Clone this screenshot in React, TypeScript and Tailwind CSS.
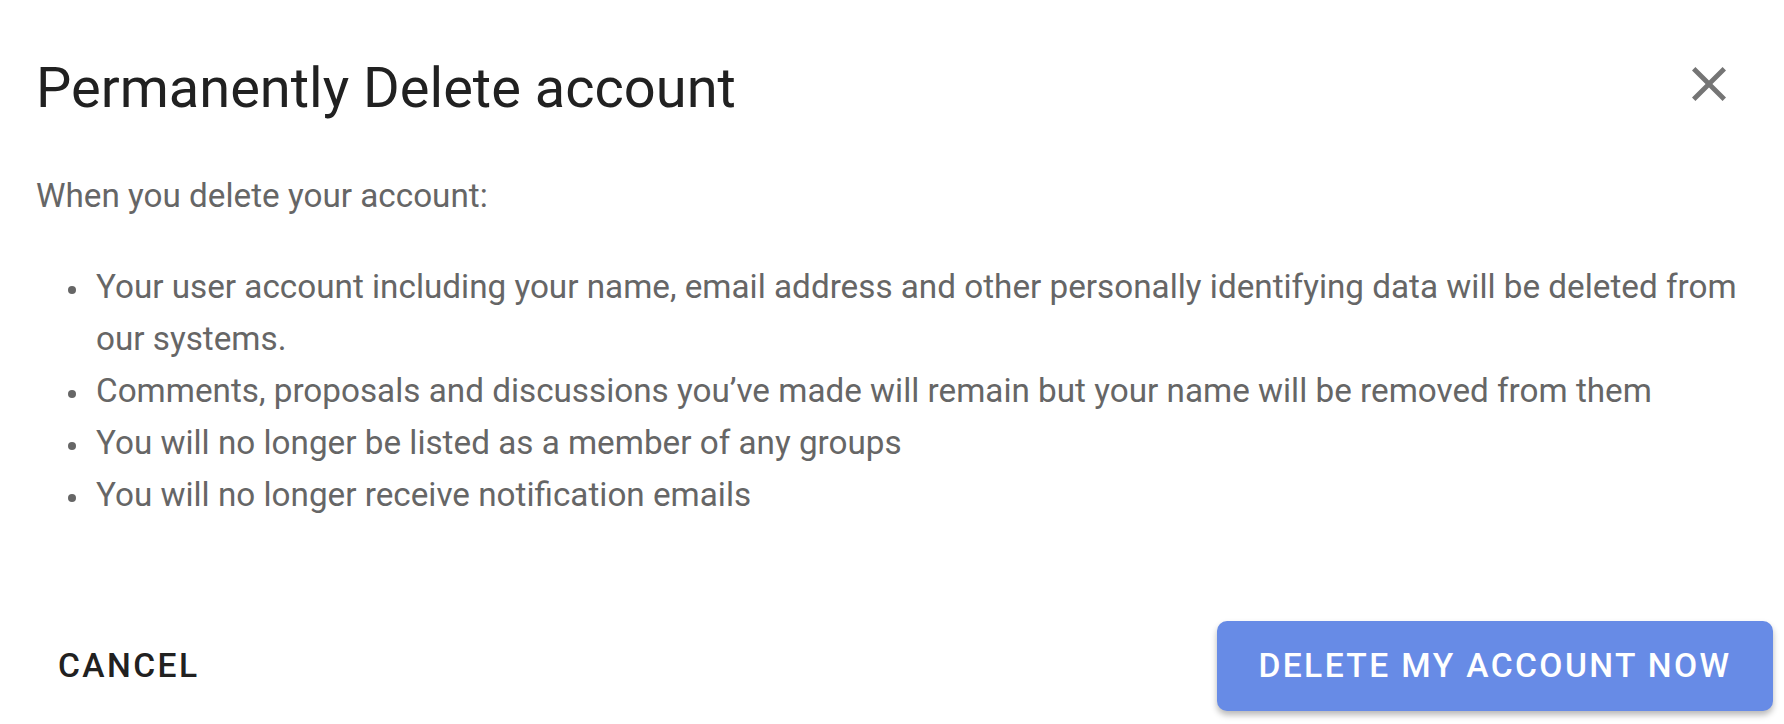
const items = [
  'Your user account including your name, email address and other personally identifying data will be deleted from our systems.',
  'Comments, proposals and discussions you\u2019ve made will remain but your name will be removed from them',
  'You will no longer be listed as a member of any groups',
  'You will no longer receive notification emails',
];

export default function App() {
  return (
    <div className="w-full h-[724px] bg-white font-['Roboto',sans-serif] overflow-hidden flex flex-col">
      <div className="flex items-start justify-between pl-[36px] pr-[46px] pt-[54px]">
        <h2 className="text-[56px] leading-[68px] font-normal text-[#212121]">Permanently Delete account</h2>
        <button className="w-[58px] h-[58px] mt-[1px] flex items-center justify-center text-[#757575]">
          <svg viewBox="5 5 14 14" className="w-[34px] h-[34px]" fill="currentColor">
            <path d="M19 6.41 17.59 5 12 10.59 6.41 5 5 6.41 10.59 12 5 17.59 6.41 19 12 13.41 17.59 19 19 17.59 13.41 12z" />
          </svg>
        </button>
      </div>

      <div className="pl-[36px] pr-[20px] mt-[48px] text-[33.25px] leading-[52px] text-[#666666]">
        <p>When you delete your account:</p>
        <ul className="mt-[39px] pl-[32px]">
          {items.map((item) => (
            <li key={item} className="flex">
              <span className="w-[28px] shrink-0 h-[52px] flex items-start pt-[25px]">
                <span className="block w-[8px] h-[8px] rounded-full bg-[#666666]" />
              </span>
              <span>{item}</span>
            </li>
          ))}
        </ul>
      </div>

      <div className="mt-auto mb-[13px] flex items-center justify-between pl-[36px] pr-[11px]">
        <button className="h-[90px] px-[22px] text-[33.6px] leading-[90px] font-medium tracking-[2.4px] uppercase text-[#212121]">
          Cancel
        </button>
        <button className="h-[90px] w-[556px] rounded-[10px] bg-[#678be6] text-white text-[33.6px] leading-[90px] font-medium tracking-[2.4px] uppercase shadow-[0_4px_6px_rgba(0,0,0,0.28)]">
          Delete my account now
        </button>
      </div>
    </div>
  );
}
